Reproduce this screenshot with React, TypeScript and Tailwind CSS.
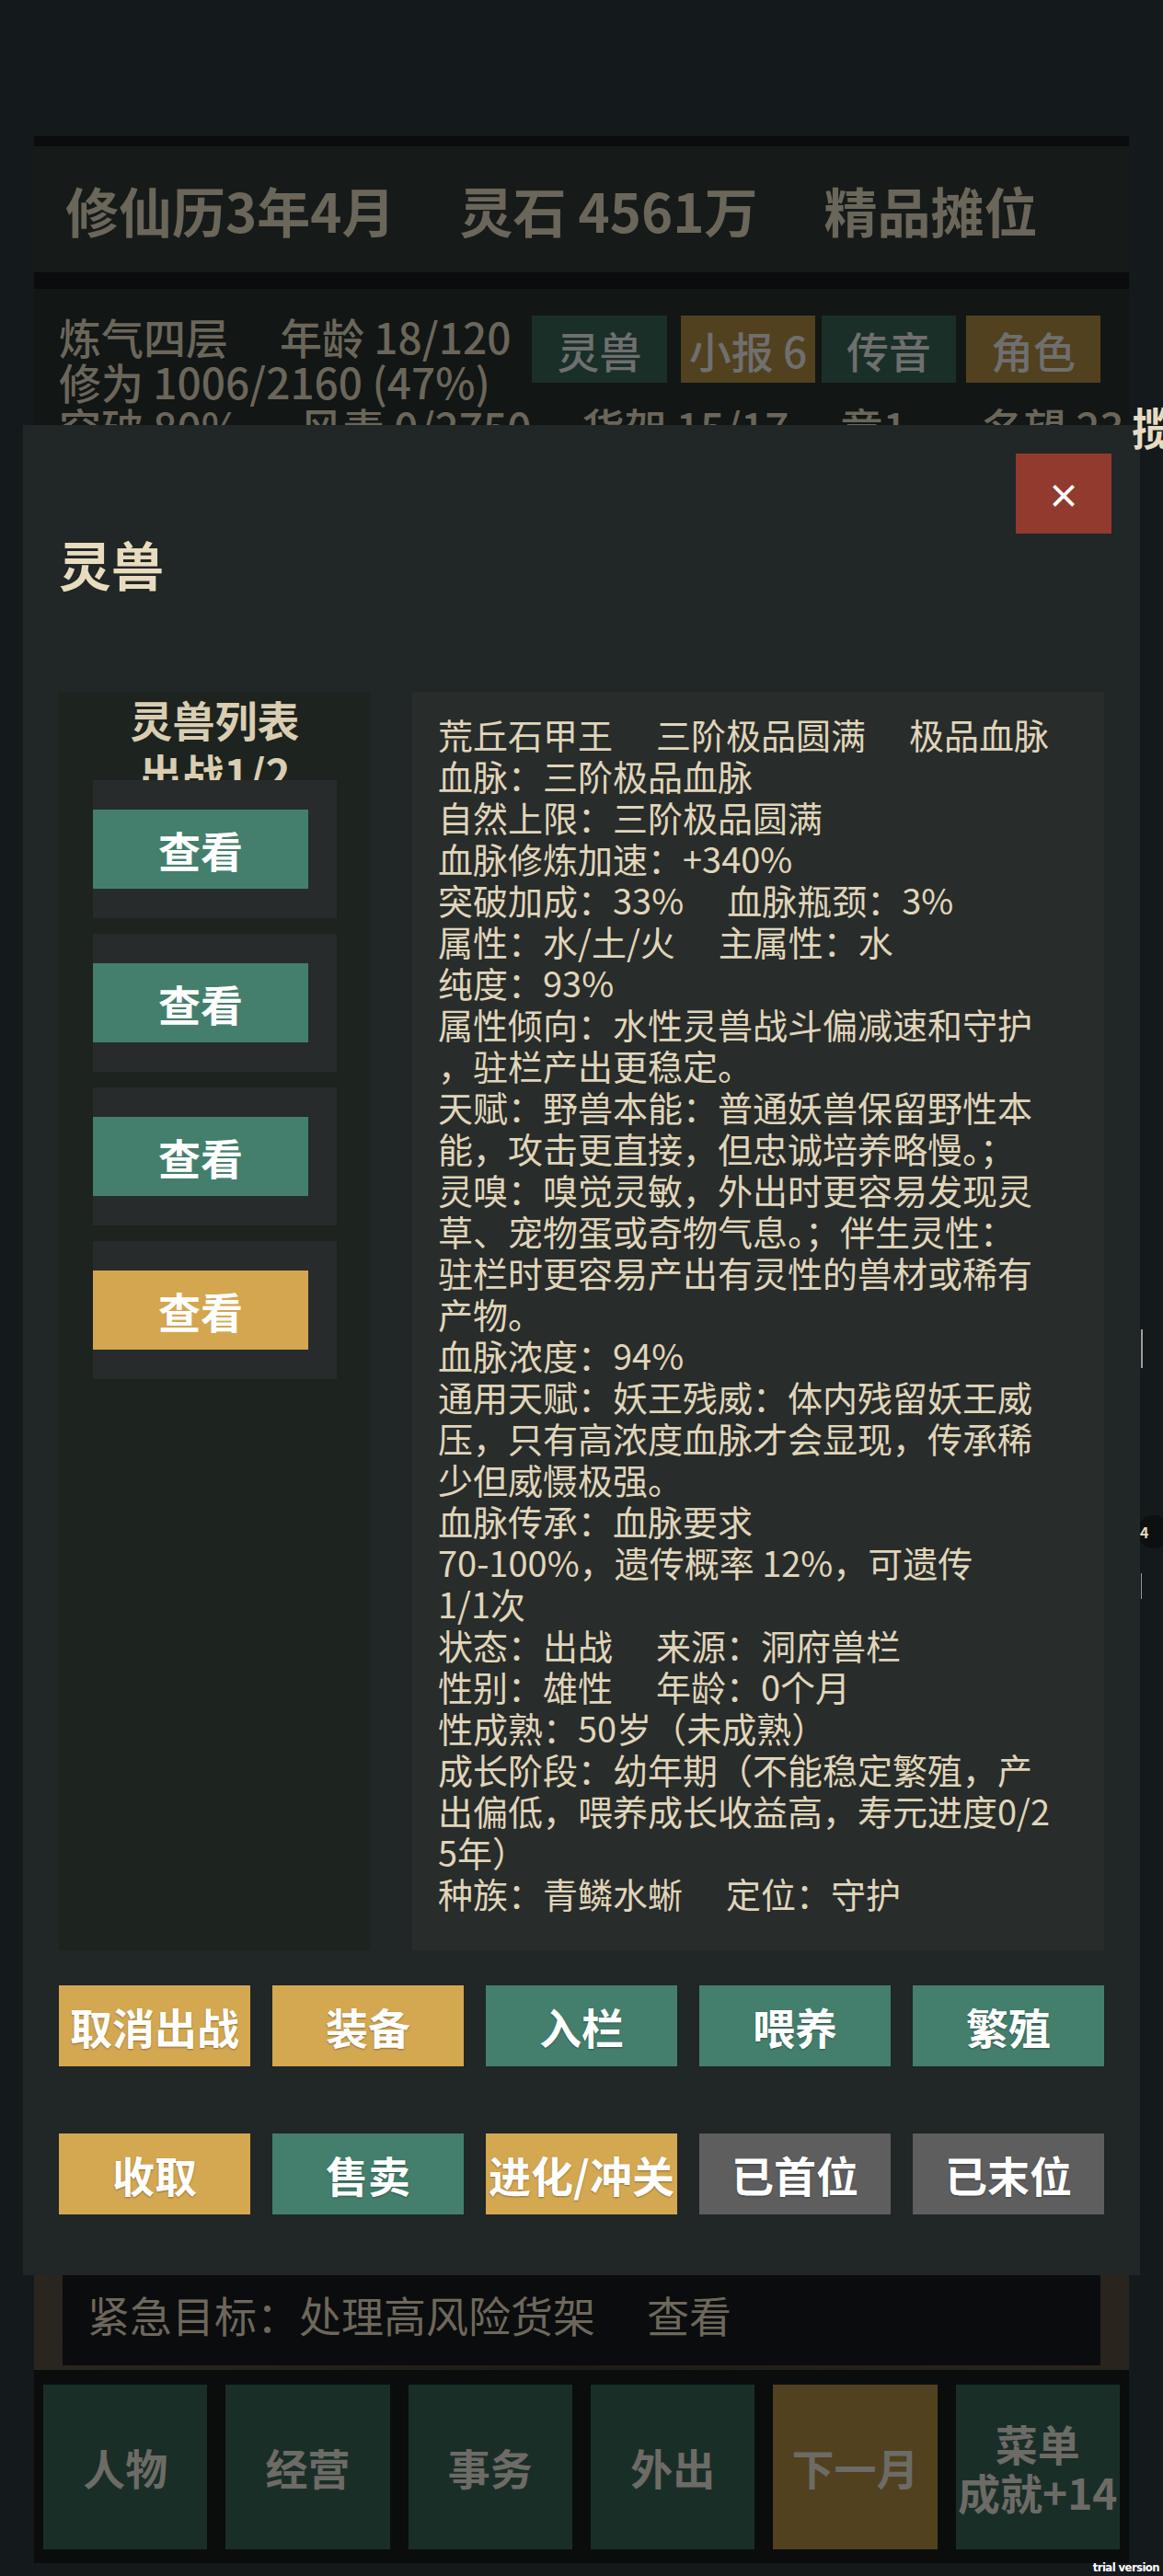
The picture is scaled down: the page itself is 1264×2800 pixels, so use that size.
import React from 'react';

const detailLines: string[][] = [
  ['荒丘石甲王', '三阶极品圆满', '极品血脉'],
  ['血脉：三阶极品血脉'],
  ['自然上限：三阶极品圆满'],
  ['血脉修炼加速：+340%'],
  ['突破加成：33%', '血脉瓶颈：3%'],
  ['属性：水/土/火', '主属性：水'],
  ['纯度：93%'],
  ['属性倾向：水性灵兽战斗偏减速和守护'],
  ['，驻栏产出更稳定。'],
  ['天赋：野兽本能：普通妖兽保留野性本'],
  ['能，攻击更直接，但忠诚培养略慢。；'],
  ['灵嗅：嗅觉灵敏，外出时更容易发现灵'],
  ['草、宠物蛋或奇物气息。；伴生灵性：'],
  ['驻栏时更容易产出有灵性的兽材或稀有'],
  ['产物。'],
  ['血脉浓度：94%'],
  ['通用天赋：妖王残威：体内残留妖王威'],
  ['压，只有高浓度血脉才会显现，传承稀'],
  ['少但威慑极强。'],
  ['血脉传承：血脉要求'],
  ['70-100%，遗传概率 12%，可遗传'],
  ['1/1次'],
  ['状态：出战', '来源：洞府兽栏'],
  ['性别：雄性', '年龄：0个月'],
  ['性成熟：50岁（未成熟）'],
  ['成长阶段：幼年期（不能稳定繁殖，产'],
  ['出偏低，喂养成长收益高，寿元进度0/2'],
  ['5年）'],
  ['种族：青鳞水蜥', '定位：守护'],
];

const gold = 'bg-[#d4a851]';
const green = 'bg-[#447f6d]';
const gray = 'bg-[#5e5e5e]';

const actions = [
  { label: '取消出战', color: gold },
  { label: '装备', color: gold },
  { label: '入栏', color: green },
  { label: '喂养', color: green },
  { label: '繁殖', color: green },
  { label: '收取', color: gold },
  { label: '售卖', color: green },
  { label: '进化/冲关', color: gold },
  { label: '已首位', color: gray },
  { label: '已末位', color: gray },
];

const navItems = [
  { label: ['人物'], color: 'bg-[#1a2e28]' },
  { label: ['经营'], color: 'bg-[#1a2e28]' },
  { label: ['事务'], color: 'bg-[#1a2e28]' },
  { label: ['外出'], color: 'bg-[#1a2e28]' },
  { label: ['下一月'], color: 'bg-[#51411f]' },
  { label: ['菜单', '成就+14'], color: 'bg-[#1a2e28]' },
];

function Gap({ w }: { w: string }) {
  return <span className={`inline-block ${w}`} />;
}

export default function App() {
  return (
    <div className="relative w-[1264px] h-[2800px] overflow-hidden bg-[#14191c] font-['Noto_Sans_CJK_SC','Noto_Sans',sans-serif]">
      {/* background page (dimmed) */}
      <div className="pt-[148px] px-[37px]">
        <div className="h-[11px] bg-[#0a0c0d]" />
        <div className="h-[137px] bg-[#161b19] flex items-center pl-[34px] text-[58px] leading-none font-bold text-[#6b665a] whitespace-nowrap">
          <span>修仙历3年4月</span>
          <Gap w="w-[70px]" />
          <span>灵石 4561万</span>
          <Gap w="w-[72px]" />
          <span>精品摊位</span>
        </div>
        <div className="h-[18px] bg-[#0a0c0d]" />
        <div className="h-[2126px] bg-[#121615] pt-[27px] pl-[27px] pr-[31px] text-[46px] leading-[49px] font-medium text-[#6b665a] whitespace-nowrap">
          <div className="flex justify-between items-start">
            <div>
              <div>
                <span>炼气四层</span>
                <Gap w="w-[56px]" />
                <span>年龄 18/120</span>
              </div>
              <div>修为 1006/2160 (47%)</div>
            </div>
            <div className="flex mt-[2px] text-[#6f6f6f] leading-none">
              <div className="w-[147px] h-[73px] bg-[#1a2f28] flex items-center justify-center">灵兽</div>
              <div className="ml-[15px] w-[146px] h-[73px] bg-[#52411f] flex items-center justify-center">小报 6</div>
              <div className="ml-[7px] w-[146px] h-[73px] bg-[#1a2f28] flex items-center justify-center">传音</div>
              <div className="ml-[11px] w-[146px] h-[73px] bg-[#52411f] flex items-center justify-center">角色</div>
            </div>
          </div>
          <div>
            <span>突破 80%</span>
            <Gap w="w-[64px]" />
            <span>风毒 0/2750</span>
            <Gap w="w-[55px]" />
            <span>货架 15/17</span>
            <Gap w="w-[56px]" />
            <span>章1</span>
            <Gap w="w-[81px]" />
            <span>名望 23</span>
          </div>
        </div>
        {/* urgent goal bar */}
        <div className="h-[136px] px-[31px] pt-[5px] pb-[5px] bg-gradient-to-r from-[#2a261f] via-[#1f1c17] to-[#29251e]">
          <div className="h-[126px] bg-[#0b0c0e] flex items-center pt-[14px] pl-[27px] text-[46px] leading-none text-[#6d685b] whitespace-nowrap">
            <span>紧急目标：处理高风险货架</span>
            <Gap w="w-[56px]" />
            <span>查看</span>
          </div>
        </div>
        {/* bottom nav */}
        <div className="h-[210px] bg-[#0a0d0c] px-[10px] pt-[16px] flex gap-[20px]">
          {navItems.map((n, i) => (
            <div
              key={i}
              className={`flex-1 h-[179px] ${n.color} flex flex-col items-center justify-center text-[46px] leading-[53px] font-bold text-[#6c6b66] whitespace-nowrap`}
            >
              {n.label.map((l) => (
                <div key={l}>{l}</div>
              ))}
            </div>
          ))}
        </div>
      </div>

      {/* floating bits at the right edge */}
      <div className="absolute left-[1230px] top-[439px] z-20 text-[48px] leading-none font-bold text-[#e6dcc3] whitespace-nowrap">
        揽
      </div>
      <div className="absolute left-[1240px] top-[1445px] w-[2px] h-[42px] bg-[#d9d9d9] opacity-70" />
      <div className="absolute left-[1240px] top-[1710px] w-[1px] h-[28px] bg-[#9a9a9a]" />
      <div className="absolute left-[1236px] top-[1647px] w-[36px] h-[36px] rounded-full bg-[#0d1011] flex items-center pl-[3px] text-[16px] font-bold leading-none text-[#e6dcc3]">
        4
      </div>

      {/* modal */}
      <div className="absolute left-[25px] top-[462px] w-[1214px] h-[2011px] bg-[#212626] px-[39px] z-10">
        <button className="absolute top-[31px] right-[31px] w-[104px] h-[87px] bg-[#923a2d] flex items-center justify-center text-white text-[36px] font-bold leading-none">
          ×
        </button>
        <div className="h-[290px] pt-[122px]">
          <div className="text-[57px] leading-none font-bold text-[#e8dcbf]">灵兽</div>
        </div>

        <div className="flex gap-[45px] h-[1368px]">
          {/* list */}
          <div className="w-[339px] bg-[#1d231f]">
            <div className="h-[96px] overflow-hidden text-center text-[46px] leading-[58px] font-bold text-[#d9ceb1]">
              <div>灵兽列表</div>
              <div>出战1/2</div>
            </div>
            <div className="px-[37px] flex flex-col gap-[17px]">
              {[green, green, green, 'bg-[#d4a64f]'].map((c, i) => (
                <div key={i} className="h-[150px] bg-[#272b2c] pt-[32px]">
                  <div className={`w-[234px] h-[86px] ${c} flex items-center justify-center text-white text-[46px] font-bold leading-none`}>
                    查看
                  </div>
                </div>
              ))}
            </div>
          </div>

          {/* detail */}
          <div className="flex-1 bg-[#282d2b] pt-[23px] pl-[28px] text-[38px] leading-[45px] text-[#e0d5ba] whitespace-nowrap">
            {detailLines.map((segs, i) => (
              <div key={i}>
                {segs.map((s, j) => (
                  <React.Fragment key={j}>
                    {j > 0 && <Gap w="w-[47px]" />}
                    <span>{s}</span>
                  </React.Fragment>
                ))}
              </div>
            ))}
          </div>
        </div>

        <div className="mt-[38px] grid grid-cols-5 gap-x-[24px] gap-y-[73px]">
          {actions.map((a) => (
            <div
              key={a.label}
              className={`h-[88px] ${a.color} flex items-center justify-center text-white text-[46px] font-bold leading-none whitespace-nowrap [text-shadow:0_1px_2px_rgba(0,0,0,0.35)]`}
            >
              {a.label}
            </div>
          ))}
        </div>
      </div>

      <div className="absolute right-[4px] bottom-[3px] text-[13px] font-bold leading-none text-white tracking-[-0.6px] font-['Liberation_Sans_Narrow','DejaVu_Sans_Condensed','Liberation_Sans',sans-serif]">
        trial version
      </div>
    </div>
  );
}
